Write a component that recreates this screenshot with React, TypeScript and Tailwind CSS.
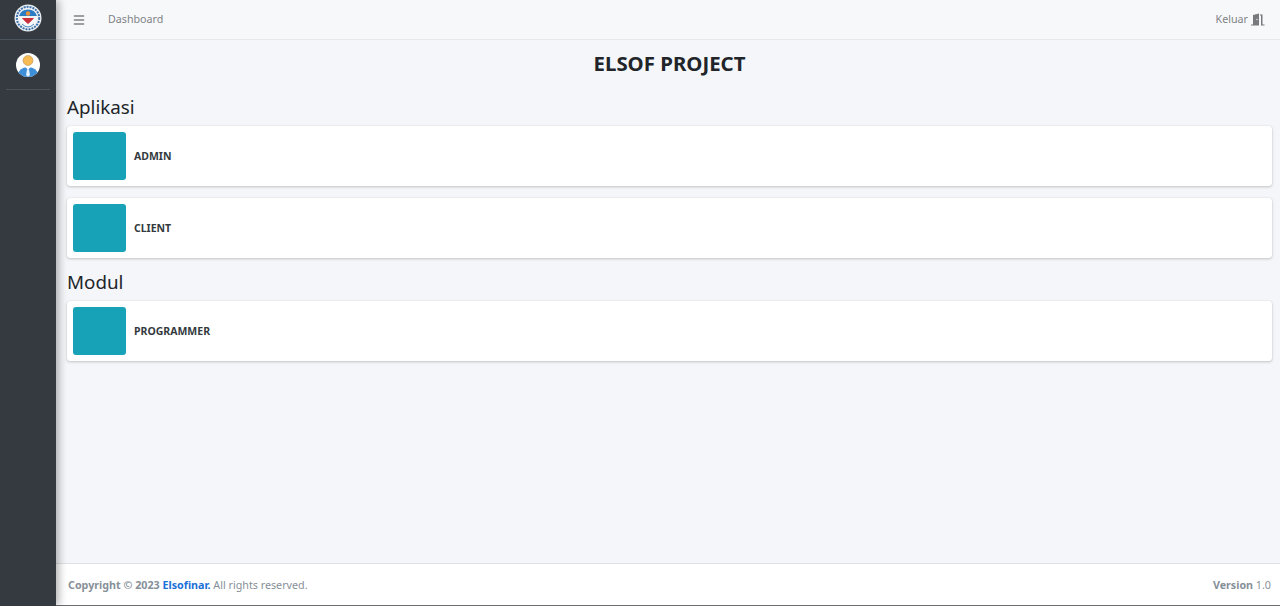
import React from 'react';
import { Menu } from 'lucide-react';

const Logo = () => (
  <svg width="28" height="28" viewBox="0 0 28 28">
    <circle cx="14" cy="14" r="13.5" fill="#eef1f4" />
    <circle cx="14" cy="14" r="11.2" fill="none" stroke="#3d73ad" strokeWidth="2" strokeDasharray="2 1" />
    <path d="M5 12 A9.5 9.5 0 0 1 23 12 Z" fill="#2a7cc4" />
    <circle cx="14" cy="9.5" r="2.2" fill="#e8903a" />
    <path d="M7 14 H21 L14 20 Z" fill="#c9303a" />
    <path d="M5.5 13 H7 L14 21 L21 13 H22.5 Q22 23 14 24.5 Q6 23 5.5 13 Z" fill="#f6f8fa" />
    <path d="M8 20 Q14 26 20 20" fill="none" stroke="#4a86c0" strokeWidth="1" />
  </svg>
);

const Avatar = () => (
  <svg width="24" height="24" viewBox="0 0 24 24">
    <clipPath id="avatar-clip">
      <circle cx="12" cy="12" r="12" />
    </clipPath>
    <g clipPath="url(#avatar-clip)">
      <rect width="24" height="24" fill="#ffffff" />
      <path d="M1 25 Q2 14 12 14 Q22 14 23 25 Z" fill="#3f8ed8" />
      <path d="M9.5 14 H14.5 L12 17 Z" fill="#ffffff" />
      <path d="M11 16.5 H13 L14 22 L12 24 L10 22 Z" fill="#e4f0fa" />
      <circle cx="12" cy="7.5" r="5" fill="#f6bb55" stroke="#a8824a" strokeWidth="0.5" />
    </g>
  </svg>
);

const DoorIcon = () => (
  <svg width="15" height="13" viewBox="0 0 15 13" fill="#77797c">
    <path d="M1 11.5 H3 V2 L9 0.5 V12.5 L1 12.5 Z" />
    <path d="M10 1.5 H12.5 V11.5 H14.5 V12.5 H11 V2.5 H10 Z" />
    <circle cx="7" cy="6.5" r="0.8" fill="#d8dadc" />
  </svg>
);

const AppCard = ({ label }: { label: string }) => (
  <div className="flex h-[60px] items-center rounded-[3px] bg-white p-[6px] shadow-[0_0_1px_rgba(0,0,0,0.13),0_1px_3px_rgba(0,0,0,0.2)]">
    <div className="h-[48px] w-[53px] rounded-[3px] bg-[#17a2b8]" />
    <span className="pl-2 pt-[2px] text-[10.5px] font-bold text-[#343a40]">{label}</span>
  </div>
);

export default function App() {
  return (
    <div className="flex h-[606px] w-[1280px] overflow-hidden bg-[#f4f6f9] font-['Noto_Sans',sans-serif] text-[#212529]">
      {/* Sidebar */}
      <aside className="z-10 flex w-[56px] shrink-0 flex-col items-center bg-[#343a40] shadow-[3px_0_8px_rgba(0,0,0,0.3)]">
        <div className="flex h-[40px] w-full items-center justify-center border-b border-[#4b545c] pb-[6px] pt-[2px]">
          <Logo />
        </div>
        <div className="flex h-[50px] w-[44px] items-center justify-center border-b border-[#4b545c]">
          <Avatar />
        </div>
      </aside>

      <div className="flex min-w-0 flex-1 flex-col">
        {/* Top bar */}
        <header className="flex h-[40px] shrink-0 items-center border-b border-[#e6e8ea] bg-[#f7f8fa] pl-[16px] pr-[15px] text-[10.7px] text-[#7f8387]">
          <Menu size={14} strokeWidth={2.5} />
          <span className="ml-[22px]">Dashboard</span>
          <div className="ml-auto flex items-center gap-[2px]">
            <span>Keluar</span>
            <DoorIcon />
          </div>
        </header>

        {/* Content */}
        <main className="flex-1 pl-[11px] pr-[8px]">
          <h1 className="mt-[10px] text-center text-[20.4px] leading-[27px] font-bold">ELSOF PROJECT</h1>
          <h2 className="mt-[14px] text-[18.8px] leading-[32px]">Aplikasi</h2>
          <div className="mt-[3px] flex flex-col gap-[12px]">
            <AppCard label="ADMIN" />
            <AppCard label="CLIENT" />
          </div>
          <h2 className="mt-[8px] text-[18.8px] leading-[32px]">Modul</h2>
          <div className="mt-[3px]">
            <AppCard label="PROGRAMMER" />
          </div>
        </main>

        {/* Footer */}
        <footer className="flex h-[43px] shrink-0 items-center justify-between border-t border-b border-t-[#dee2e6] border-b-[#6c7074] bg-white pl-[12px] pr-[9px] pt-[2px] text-[10.73px] text-[#869099] [font-variant-ligatures:none]">
          <div>
            <span className="font-bold">Copyright © 2023 <span className="text-[#1a6fd8]">Elsofinar.</span></span> All rights reserved.
          </div>
          <div>
            <span className="font-bold">Version</span> 1.0
          </div>
        </footer>
      </div>
    </div>
  );
}
